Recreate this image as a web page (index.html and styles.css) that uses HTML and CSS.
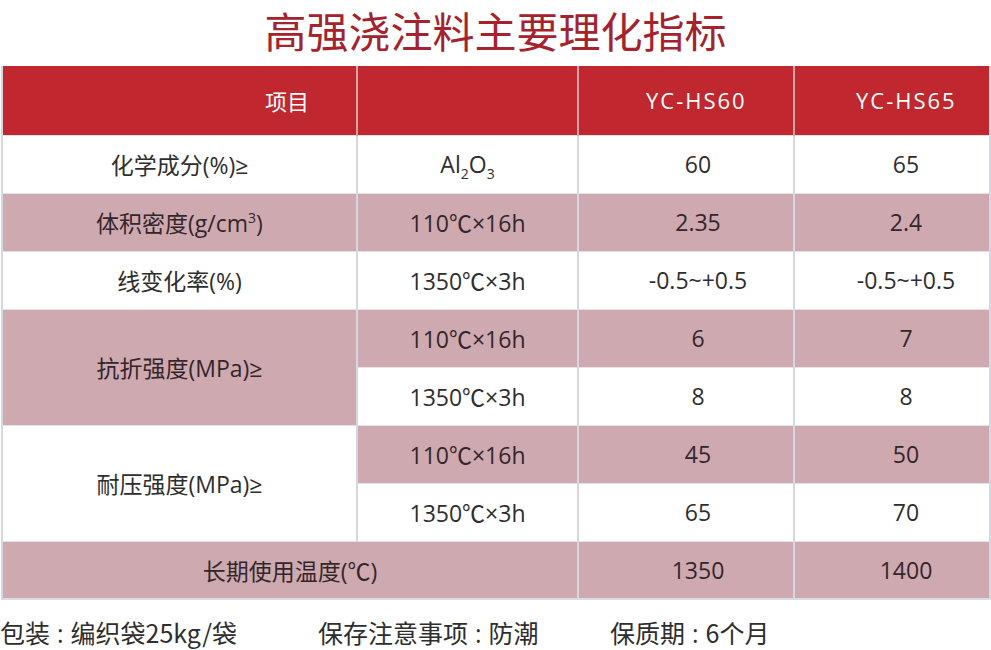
FILE: index.html
```html
<!DOCTYPE html>
<html lang="zh">
<head>
<meta charset="utf-8">
<title>高强浇注料主要理化指标</title>
<link rel="stylesheet" href="styles.css">
</head>
<body>
<h1 class="title">高强浇注料主要理化指标</h1>
<table class="spec">
  <colgroup>
    <col class="c1"><col class="c2"><col class="c3"><col class="c4">
  </colgroup>
  <thead>
    <tr class="head">
      <th class="h-item">项目</th>
      <th></th>
      <th class="h-60">YC-HS60</th>
      <th class="h-65">YC-HS65</th>
    </tr>
  </thead>
  <tbody>
    <tr class="white">
      <td>化学成分(%)≥</td>
      <td>Al<sub>2</sub>O<sub>3</sub></td>
      <td class="v3">60</td>
      <td class="v4">65</td>
    </tr>
    <tr class="pink">
      <td>体积密度(g/cm<sup>3</sup>)</td>
      <td>110℃×16h</td>
      <td class="v3">2.35</td>
      <td class="v4">2.4</td>
    </tr>
    <tr class="white">
      <td>线变化率(%)</td>
      <td>1350℃×3h</td>
      <td class="v3">-0.5~+0.5</td>
      <td class="v4">-0.5~+0.5</td>
    </tr>
    <tr class="pink">
      <td rowspan="2" class="pinkcell">抗折强度(MPa)≥</td>
      <td>110℃×16h</td>
      <td class="v3">6</td>
      <td class="v4">7</td>
    </tr>
    <tr class="white">
      <td>1350℃×3h</td>
      <td class="v3">8</td>
      <td class="v4">8</td>
    </tr>
    <tr class="pink">
      <td rowspan="2" class="whitecell">耐压强度(MPa)≥</td>
      <td>110℃×16h</td>
      <td class="v3">45</td>
      <td class="v4">50</td>
    </tr>
    <tr class="white">
      <td>1350℃×3h</td>
      <td class="v3">65</td>
      <td class="v4">70</td>
    </tr>
    <tr class="pink">
      <td colspan="2">长期使用温度(℃)</td>
      <td class="v3">1350</td>
      <td class="v4">1400</td>
    </tr>
  </tbody>
</table>
<div class="footer">
  <span>包装<span class="colon">:</span>编织袋25kg/袋</span>
  <span>保存注意事项<span class="colon">:</span>防潮</span>
  <span>保质期<span class="colon">:</span>6个月</span>
</div>
</body>
</html>
```
FILE: styles.css
```css
* { box-sizing: border-box; }

body {
  margin: 0;
  background: #ffffff;
  font-family: "Open Sans", "Noto Sans CJK SC", sans-serif;
  color: #2e2e2e;
}

.title {
  margin: 0;
  height: 66px;
  line-height: 60px;
  font-size: 42px;
  font-weight: 400;
  text-align: center;
  color: #a5222f;
  font-family: "Noto Sans CJK SC", sans-serif;
}

.spec {
  margin-left: 1px;
  width: 988px;
  border-collapse: collapse;
  table-layout: fixed;
  font-size: 23px;
  border-left: 2px solid #d6d8e0;
  border-right: 2px solid #d6d8e0;
  border-bottom: 2px solid #dcdde3;
}

.c1 { width: 355px; }
.c2 { width: 221px; }
.c3 { width: 216px; }
.c4 { width: 196px; }

.spec th,
.spec td {
  padding: 0;
  text-align: center;
  font-weight: 400;
  border-left: 2px solid #d6d8e0;
  border-top: 1px solid #e4e2e8;
}

.head th {
  height: 69px;
  font-size: 22px;
  background: #c1272f;
  color: #ffffff;
  border-left: 2px solid #d9a0a5;
  border-top: none;
}

.head th:first-child { border-left: none; }

.spec th.h-item { text-align: left; padding-left: 262px; }
.spec th.h-60 { text-align: left; padding-left: 67px; letter-spacing: 2px; }
.spec th.h-65 { text-align: left; padding-left: 61px; letter-spacing: 2px; }

.spec td { height: 58px; }

.white td { background: #ffffff; }
.pink td { background: #cfa9b0; color: #33262a; }
.spec td.pinkcell { background: #cfa9b0; color: #33262a; }
.spec td.whitecell { background: #ffffff; color: #2e2e2e; }

.spec td.v3 { padding-left: 24px; }
.spec td.v4 { padding-left: 28px; }

sub, sup {
  font-size: 14px;
  line-height: 0;
}

.footer {
  display: grid;
  grid-template-columns: 318px 292px auto;
  padding-top: 15px;
  font-size: 25px;
  line-height: 35px;
  color: #2e2e2e;
  font-family: "Noto Sans CJK SC", sans-serif;
}

.colon {
  font-family: "Open Sans", sans-serif;
  margin: 0 7px;
}
```
